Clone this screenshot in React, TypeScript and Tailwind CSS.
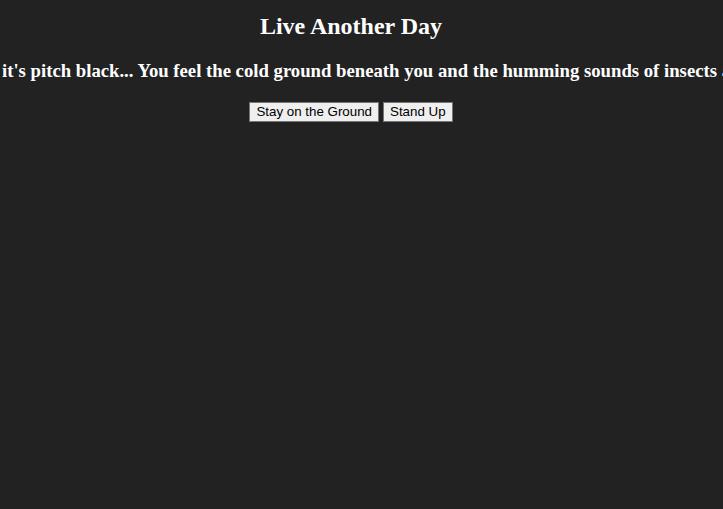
import React from 'react'

export default function App() {
  return (
    <div className="min-h-[509px] w-full overflow-hidden bg-[#222222] text-white font-['Liberation_Serif',serif]">
      <div className="w-[702px]">
        <h2 className="pt-[12px] text-center text-[24px] font-bold leading-[28px]">Live Another Day</h2>
        <div className="mt-[20px] flex justify-center">
          <h3 className="whitespace-nowrap text-[18.72px] font-bold leading-[22px]">
            You wake up and it's pitch black... You feel the cold ground beneath you and the humming sounds of insects all around you.
          </h3>
        </div>
        <div className="mt-[20px] flex justify-center gap-[4px] font-['Liberation_Sans',Arial,sans-serif] text-[13.33px] text-black">
          <button className="h-[20px] border border-[#767676] bg-[#efefef] px-[6px] leading-[16px]">Stay on the Ground</button>
          <button className="h-[20px] border border-[#767676] bg-[#efefef] px-[6px] leading-[16px]">Stand Up</button>
        </div>
      </div>
    </div>
  )
}
